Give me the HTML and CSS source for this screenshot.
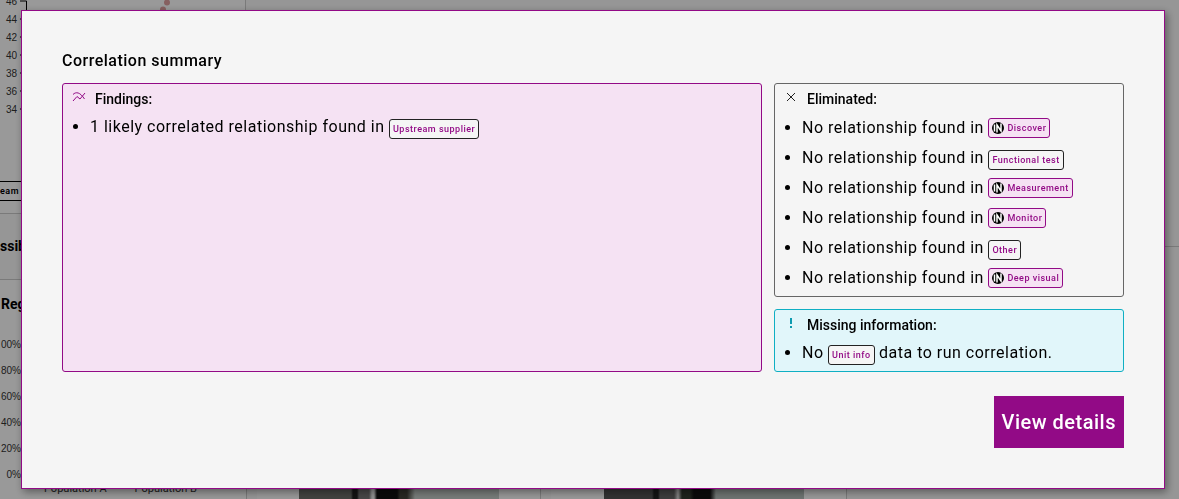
FILE: index.html
```
<!DOCTYPE html>
<html lang="en">
<head>
  <meta charset="UTF-8" />
  <title>Correlation summary</title>
  <link rel="stylesheet" href="styles.css">
</head>
<body>

<!-- shared icon for the built-in data sources -->
<svg class="defs" aria-hidden="true">
  <symbol id="in-logo" viewBox="0 0 24 24">
    <circle cx="12" cy="12" r="12" fill="#000" />
    <path d="M5 5v14M10 21V6l8 12V3" fill="none" stroke="#fff" stroke-width="3" />
  </symbol>
</svg>

<main class="page">
  <section class="scatter">
    <svg class="scatter-chart" viewBox="0 0 245 180" aria-hidden="true">
      <g class="axis-labels" text-anchor="end">
        <text x="17" y="4">46</text>
        <text x="17" y="22">44</text>
        <text x="17" y="40">42</text>
        <text x="17" y="58">40</text>
        <text x="17" y="76">38</text>
        <text x="17" y="94">36</text>
        <text x="17" y="112">34</text>
      </g>
      <path d="M20 0.5h6.500V115M20 18.500h6M20 36.500h6M20 54.500h6M20 72.500h6M20 90.500h6M20 108.500h6" fill="none" stroke="#000" />
      <circle cx="167" cy="2" r="3" fill="#e0a0a0" />
      <circle cx="163" cy="9" r="3" fill="#e0a0a0" />
    </svg>
    <span class="source">eam s</span>
  </section>
  <h2 class="page-title">ssib</h2>
  <div class="panels">
    <section class="panel regions">
      <h3>Reg</h3>
      <ul class="percent-axis">
        <li>00%</li>
        <li>80%</li>
        <li>60%</li>
        <li>40%</li>
        <li>20%</li>
        <li>0%</li>
      </ul>
      <p class="populations"><span>Population A</span><span>Population B</span></p>
    </section>
    <section class="panel photo-panel"><div class="photo"></div></section>
    <section class="panel photo-panel wide"><div class="photo photo-alt"></div></section>
  </div>
</main>

<div class="backdrop"></div>

<div class="dialog" role="dialog" aria-labelledby="dialogTitle">
  <h1 id="dialogTitle">Correlation summary</h1>
  <div class="summary">
    <section class="box findings">
      <h2>
        <svg viewBox="0 0 14 14" aria-hidden="true"><path d="M1 4.500C4 1.500 8 2 12.500 9M1 11L5 6.500L8 9L13 3" /></svg>
        Findings:
      </h2>
      <ul>
        <li>1 likely correlated relationship found in <span class="tag">Upstream supplier</span></li>
      </ul>
    </section>
    <div class="side">
      <section class="box eliminated">
        <h2>
          <svg viewBox="0 0 14 14" aria-hidden="true"><path d="M3 3l8 8M11 3l-8 8" /></svg>
          Eliminated:
        </h2>
        <ul>
          <li>No relationship found in <span class="tag tag-in"><svg><use href="#in-logo" /></svg>Discover</span></li>
          <li>No relationship found in <span class="tag">Functional test</span></li>
          <li>No relationship found in <span class="tag tag-in"><svg><use href="#in-logo" /></svg>Measurement</span></li>
          <li>No relationship found in <span class="tag tag-in"><svg><use href="#in-logo" /></svg>Monitor</span></li>
          <li>No relationship found in <span class="tag">Other</span></li>
          <li>No relationship found in <span class="tag tag-in"><svg><use href="#in-logo" /></svg>Deep visual</span></li>
        </ul>
      </section>
      <section class="box missing">
        <h2>
          <svg viewBox="0 0 14 14" aria-hidden="true"><path d="M7 2v6M7 10v2" /></svg>
          Missing information:
        </h2>
        <ul>
          <li>No <span class="tag">Unit info</span> data to run correlation.</li>
        </ul>
      </section>
    </div>
  </div>
  <button type="button" class="details-button">View details</button>
</div>

</body>
</html>
```
FILE: styles.css
```
* {
  box-sizing: border-box;
}

body {
  font-family: Roboto, "Liberation Sans", sans-serif;
  background-color: #fafafa;
  color: #000;
  margin: 0;
}

h1, h2, h3, p, ul {
  margin: 0;
  padding: 0;
}

.defs {
  display: none;
}

/* page behind the dialog */

.page {
  height: 100vh;
  overflow: hidden;
}

.scatter {
  width: 246px;
  height: 214px;
  background-color: #fff;
  border-right: 1px solid #ccc;
  border-bottom: 1px solid #ccc;
}

.scatter-chart {
  display: block;
  width: 245px;
  height: 181px;
}

.axis-labels {
  font-family: "Liberation Sans", sans-serif;
  font-size: 10px;
  fill: #333;
}

.source {
  display: block;
  width: 60px;
  height: 20px;
  border: 1px solid #000;
  border-left: none;
  font-size: 9px;
  font-weight: 600;
  line-height: 18px;
  letter-spacing: 0.5px;
  overflow: hidden;
}

.page-title {
  height: 65px;
  font-size: 14px;
  line-height: 64px;
  background: linear-gradient(#ccc, #ccc) 246px 32px / 100% 1px no-repeat;
}

.panels {
  display: flex;
  gap: 10px;
  height: 100%;
}

.panel {
  background-color: #fff;
  border: 1px solid #ccc;
  border-left: none;
}

.regions {
  width: 247px;
  padding-top: 12px;
}

.regions h3 {
  padding-left: 1px;
  font-size: 14px;
  line-height: 24px;
}

.percent-axis {
  width: 21px;
  margin-top: 16px;
  list-style: none;
  text-align: right;
  font-family: "Liberation Sans", sans-serif;
  font-size: 10px;
  line-height: 26px;
  color: #333;
}

.populations {
  display: flex;
  gap: 28px;
  padding-left: 44px;
  font-size: 11px;
  line-height: 2px;
  color: #333;
}

.photo-panel {
  width: 284px;
  padding: 160px 42px 0;
}

.wide {
  width: 296px;
  padding-left: 53px;
}

.photo {
  width: 200px;
  height: 200px;
  background: linear-gradient(90deg, #6e716c 0 52px, #222 54px 58px, #777 60px 70px, #eee 73px 75px, #111 78px 98px, #44443a 101px 108px, #c8d0cc 116px);
}

.photo-alt {
  background: linear-gradient(90deg, #555 0 48px, #222 50px 54px, #666 56px 70px, #ddd 74px, #333a30 78px 86px, #111 90px 106px, #b8c2be 112px);
}

.backdrop {
  position: fixed;
  inset: 0;
  background-color: rgba(0, 0, 0, 0.4);
}

/* dialog */

.dialog {
  position: fixed;
  inset: 10px 14px 10px 21px;
  display: flex;
  flex-direction: column;
  padding: 36px 40px 40px;
  background-color: #f5f5f5;
  border: 1px solid #920a86;
  box-shadow: 2px 3px 8px rgba(0, 0, 0, 0.4);
}

.dialog h1 {
  font-size: 16px;
  font-weight: 500;
  line-height: 28px;
  letter-spacing: 0.5px;
}

.summary {
  display: grid;
  grid-template-columns: 2fr 1fr;
  gap: 12px;
  margin-top: 8px;
}

.side {
  display: flex;
  flex-direction: column;
  gap: 12px;
}

.box {
  padding: 1px 8px 3px;
  border: 1px solid #666;
  border-radius: 3px;
}

.findings {
  background-color: #f5e2f3;
  border-color: #920a86;
}

.missing {
  background-color: #e1f6fa;
  border-color: #0fafc3;
}

.box h2 {
  display: flex;
  gap: 8px;
  font-size: 14px;
  font-weight: 500;
  line-height: 28px;
}

.box h2 svg {
  width: 14px;
  height: 14px;
  margin: 5px 1px 0;
  fill: none;
  stroke: #222;
  stroke-width: 1;
}

.findings h2 svg {
  stroke: #920a86;
}

.missing h2 svg {
  stroke: #0d9bb0;
  stroke-width: 2;
}

.box ul {
  padding-left: 19px;
}

.box li {
  height: 30px;
  font-size: 16px;
  line-height: 30px;
  letter-spacing: 0.5px;
}

.findings li,
.missing li {
  height: 29px;
  line-height: 28px;
}

.tag {
  display: inline-flex;
  align-items: center;
  gap: 3px;
  height: 20px;
  padding: 0 3px;
  background-color: #f5f5f5;
  border: 1px solid #222;
  border-radius: 3px;
  color: #920a86;
  font-size: 9px;
  font-weight: 500;
  line-height: 18px;
  letter-spacing: 0.5px;
}

.tag-in {
  background-color: #f5e2f3;
  border-color: #920a86;
  vertical-align: text-top;
}

.tag svg {
  width: 12px;
  height: 12px;
}

.details-button {
  align-self: flex-end;
  height: 52px;
  margin-top: 24px;
  padding: 0 8px;
  background-color: #920a86;
  border: none;
  color: #fff;
  font-family: inherit;
  font-size: 20px;
  font-weight: 500;
  letter-spacing: 0.5px;
  cursor: pointer;
}

.details-button:hover {
  background-color: #74086b;
}
```
